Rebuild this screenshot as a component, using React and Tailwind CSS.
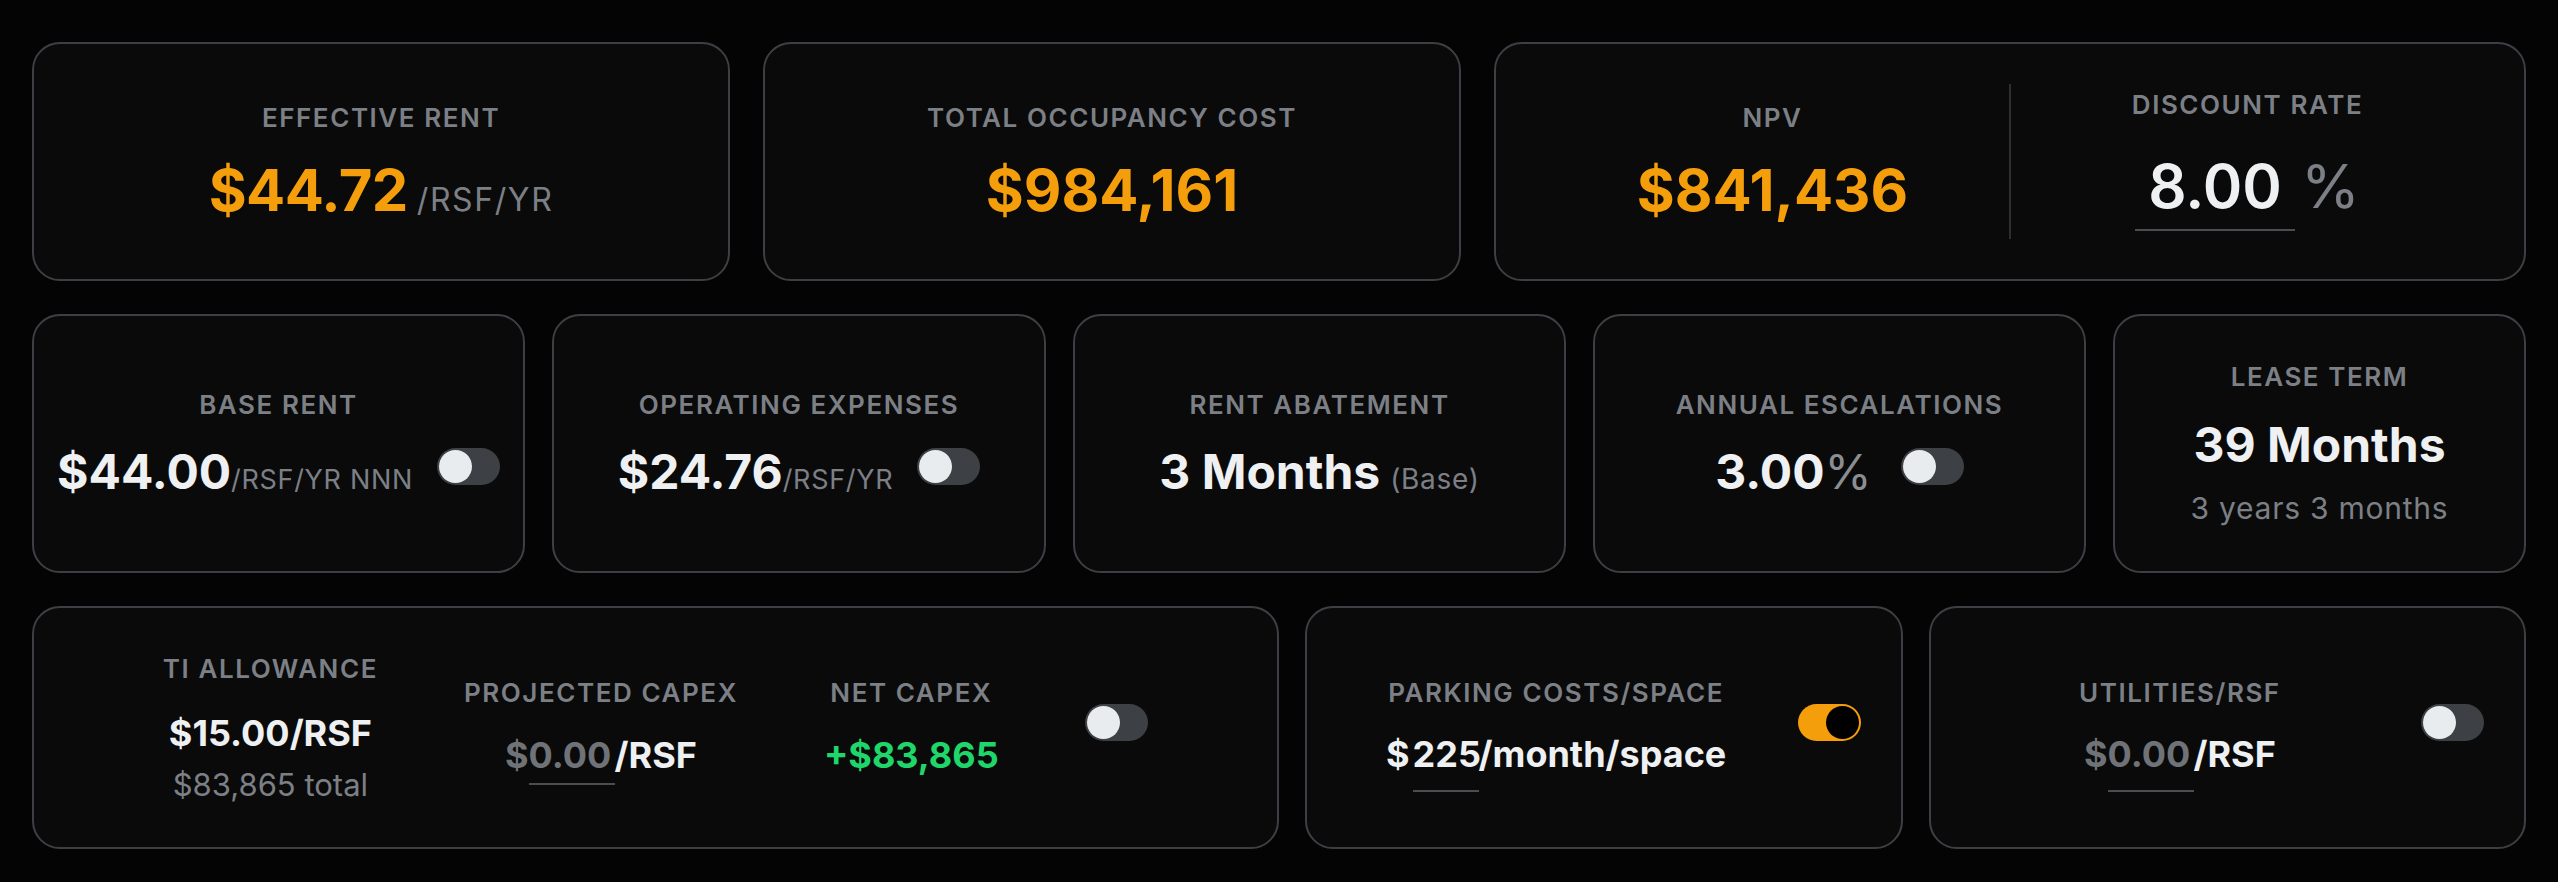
import React from 'react';

const Card = ({ className = '', children }) => (
  <div className={`rounded-[28px] border-2 border-[#3c3f43] bg-[#0a0a0a] ${className}`}>
    {children}
  </div>
);

const Label = ({ children }) => (
  <div className="text-[26px] leading-none font-semibold tracking-[0.06em] uppercase text-[#7c8086] whitespace-nowrap">
    {children}
  </div>
);

const Toggle = ({ on = false, className = '' }) => (
  <div
    className={
      on
        ? `flex justify-end shrink-0 w-[63px] h-[37px] rounded-full bg-[#f59e0b] p-[2px] ${className}`
        : `flex justify-start shrink-0 w-[63px] h-[37px] rounded-full bg-[#3d4044] p-[2px] ${className}`
    }
  >
    <div className={on ? 'w-[33px] h-[33px] rounded-full bg-black' : 'w-[33px] h-[33px] rounded-full bg-[#e9ecef]'} />
  </div>
);

export default function App() {
  return (
    <div className="min-h-screen bg-[#040405] px-8 pt-[42px] pb-8 font-['Inter','Noto_Sans',sans-serif] flex flex-col gap-[33px]">
      {/* Top summary row */}
      <div className="grid grid-cols-[698fr_698fr_1032fr] gap-[33px] h-[239px]">
        <Card className="flex flex-col items-center justify-center gap-[30px]">
          <Label>Effective Rent</Label>
          <div className="flex items-baseline leading-none">
            <span className="text-[58px] font-bold tracking-[-0.01em] text-[#f59e0b]">$44.72</span>
            <span className="ml-[9px] text-[32px] tracking-wider text-[#7c8086]">/RSF/YR</span>
          </div>
        </Card>

        <Card className="flex flex-col items-center justify-center gap-[30px]">
          <Label>Total Occupancy Cost</Label>
          <div className="leading-none text-[58px] font-bold text-[#f59e0b]">$984,161</div>
        </Card>

        <Card className="flex items-stretch px-10 py-[40px]">
          <div className="flex-1 flex flex-col items-center justify-center gap-[30px]">
            <Label>NPV</Label>
            <div className="leading-none text-[58px] font-bold text-[#f59e0b]">$841,436</div>
          </div>
          <div className="flex-1 flex flex-col items-center justify-center border-l-2 border-[#2c2e31]">
            <Label>Discount Rate</Label>
            <div className="mt-[38px] flex items-baseline leading-none">
              <div className="w-[160px] text-center text-[60px] font-semibold text-[#eef0f2] pb-[13px] border-b-2 border-[#4a4e53]">
                8.00
              </div>
              <span className="ml-[6px] text-[60px] text-[#7c8086]">%</span>
            </div>
          </div>
        </Card>
      </div>

      {/* Lease inputs row */}
      <div className="grid grid-cols-[493fr_494fr_493fr_493fr_413fr] gap-[27px] h-[259px]">
        <Card className="flex flex-col items-center justify-center gap-[30px]">
          <Label>Base Rent</Label>
          <div className="flex items-center">
            <div className="flex items-baseline leading-none">
              <span className="text-[48px] font-bold text-[#eef0f2]">$44.00</span>
              <span className="text-[27px] tracking-wide text-[#7c8086]">/RSF/YR NNN</span>
            </div>
            <Toggle className="ml-6 mb-[10px]" />
          </div>
        </Card>

        <Card className="flex flex-col items-center justify-center gap-[30px]">
          <Label>Operating Expenses</Label>
          <div className="flex items-center">
            <div className="flex items-baseline leading-none">
              <span className="text-[48px] font-bold text-[#eef0f2]">$24.76</span>
              <span className="text-[27px] tracking-wide text-[#7c8086]">/RSF/YR</span>
            </div>
            <Toggle className="ml-6 mb-[10px]" />
          </div>
        </Card>

        <Card className="flex flex-col items-center justify-center gap-[30px]">
          <Label>Rent Abatement</Label>
          <div className="flex items-baseline leading-none">
            <span className="text-[48px] font-bold text-[#eef0f2]">3 Months</span>
            <span className="ml-[10px] text-[28px] tracking-wide text-[#7c8086]">(Base)</span>
          </div>
        </Card>

        <Card className="flex flex-col items-center justify-center gap-[30px]">
          <Label>Annual Escalations</Label>
          <div className="flex items-center">
            <div className="flex items-baseline leading-none">
              <span className="text-[48px] font-bold text-[#eef0f2]">3.00</span>
              <span className="text-[48px] text-[#8a8e93]">%</span>
            </div>
            <Toggle className="ml-[29px] mb-[10px]" />
          </div>
        </Card>

        <Card className="flex flex-col items-center justify-center">
          <Label>Lease Term</Label>
          <div className="mt-[31px] leading-none text-[48px] font-bold text-[#eef0f2]">39 Months</div>
          <div className="mt-[24px] leading-none text-[30px] tracking-wide text-[#7c8086]">3 years 3 months</div>
        </Card>
      </div>

      {/* Capex / extras row */}
      <div className="grid grid-cols-[1246fr_598fr_597fr] gap-[26px] h-[243px]">
        <Card className="flex items-center justify-center gap-[86px]">
          <div className="flex flex-col items-center">
            <Label>TI Allowance</Label>
            <div className="mt-[33px] leading-none text-[36px] font-bold text-[#eef0f2]">$15.00/RSF</div>
            <div className="mt-[18px] leading-none text-[31px] text-[#7c8086]">$83,865 total</div>
          </div>

          <div className="flex flex-col items-center mt-[9px]">
            <Label>Projected Capex</Label>
            <div className="mt-[31px] flex items-baseline leading-none text-[36px] font-bold">
              <span className="text-[#6f7378]">$</span>
              <div className="w-[86px] text-left text-[#6f7378] pb-[10px] border-b-2 border-[#4a4e53]">0.00</div>
              <span className="text-[#eef0f2]">/RSF</span>
            </div>
          </div>

          <div className="flex flex-col items-center mt-[9px]">
            <Label>Net Capex</Label>
            <div className="mt-[31px] leading-none text-[36px] font-bold text-[#1fd66a] pb-[10px] border-b-2 border-transparent">
              +$83,865
            </div>
          </div>

          <Toggle className="mb-[10px]" />
        </Card>

        <Card className="flex items-center gap-8 px-10">
          <div className="flex-1 flex flex-col items-center mt-[16px]">
            <Label>Parking Costs/Space</Label>
            <div className="mt-[30px] flex items-baseline leading-none text-[36px] font-bold text-[#eef0f2]">
              <span>$</span>
              <div className="ml-[3px] w-[66px] text-center pb-[18px] border-b-2 border-[#4a4e53]">225</div>
              <span>/month/space</span>
            </div>
          </div>
          <Toggle on className="mb-[10px]" />
        </Card>

        <Card className="flex items-center gap-8 px-10">
          <div className="flex-1 flex flex-col items-center mt-[16px]">
            <Label>Utilities/RSF</Label>
            <div className="mt-[30px] flex items-baseline leading-none text-[36px] font-bold">
              <span className="text-[#6f7378]">$</span>
              <div className="w-[86px] text-left text-[#6f7378] pb-[18px] border-b-2 border-[#4a4e53]">0.00</div>
              <span className="text-[#eef0f2]">/RSF</span>
            </div>
          </div>
          <Toggle className="mb-[10px]" />
        </Card>
      </div>
    </div>
  );
}
